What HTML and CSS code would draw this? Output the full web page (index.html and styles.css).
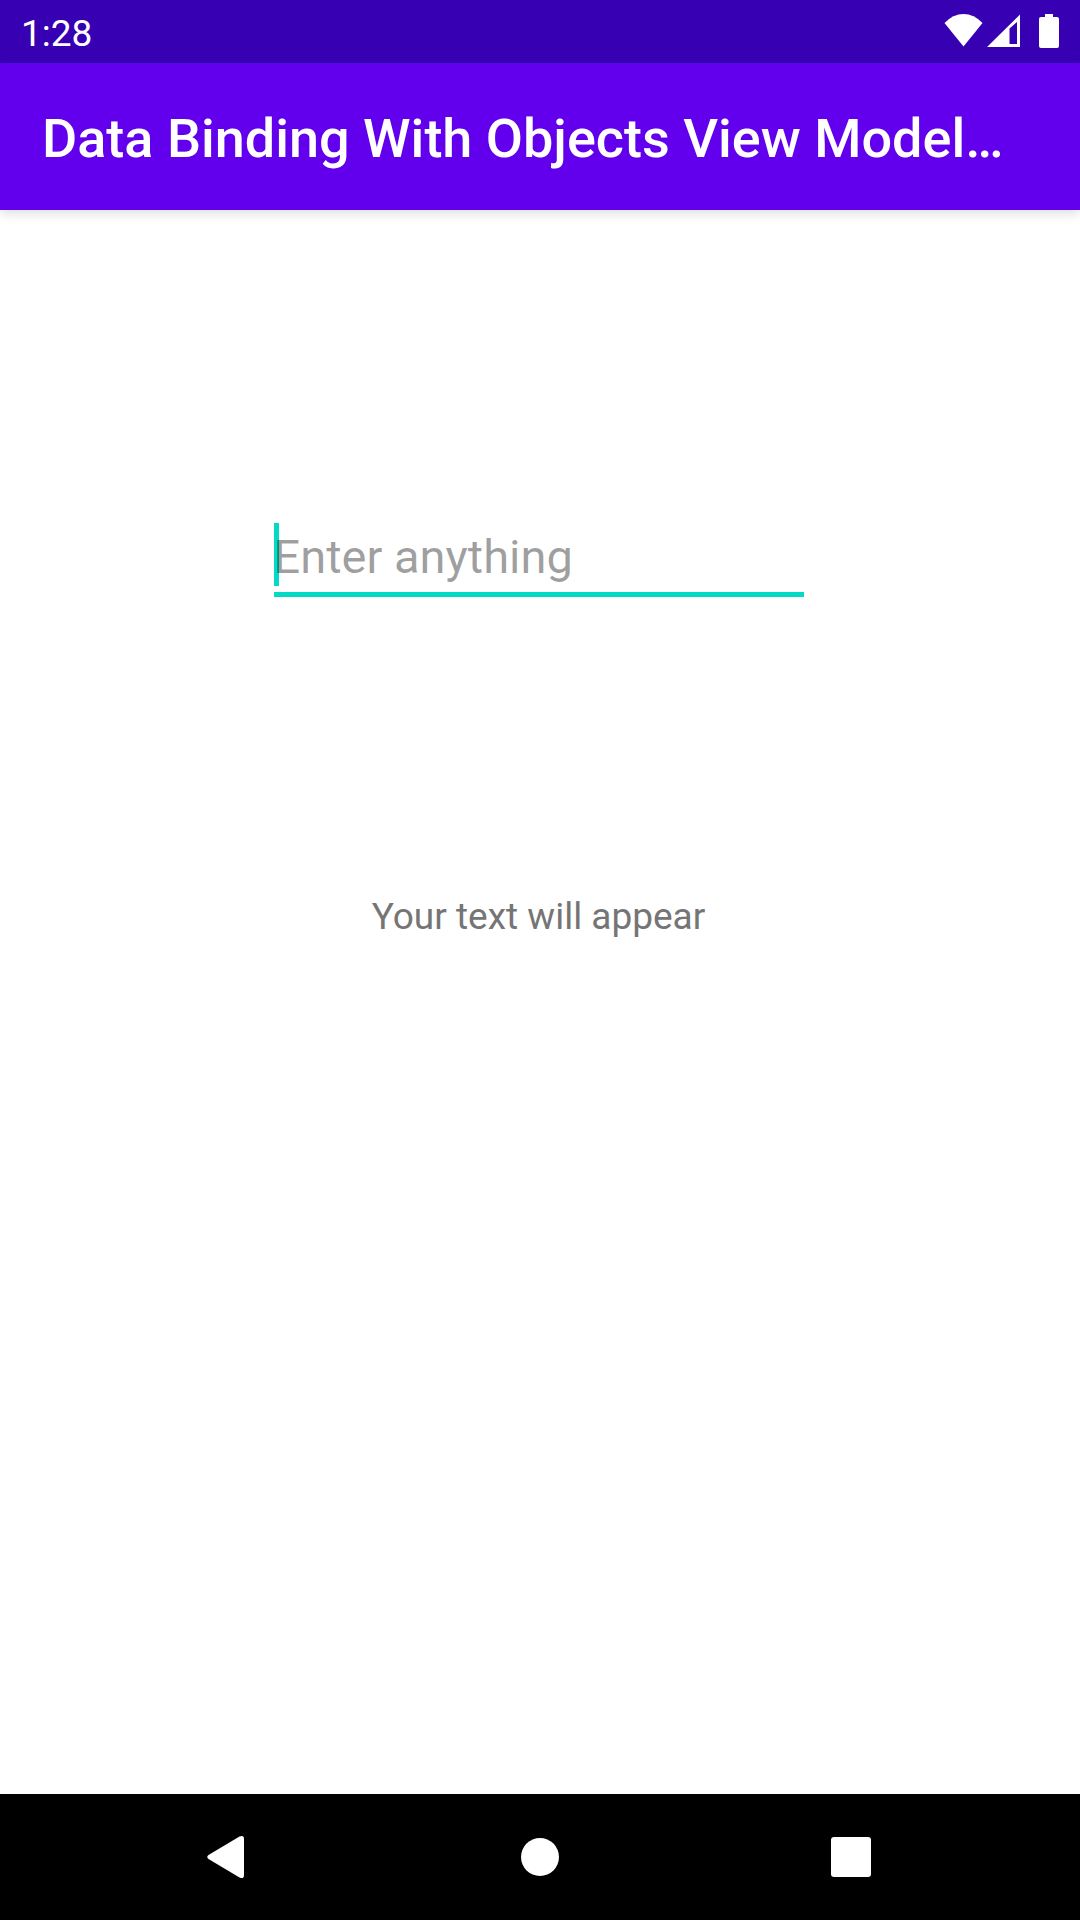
FILE: index.html
```html
<!DOCTYPE html>
<html lang="en">
<head>
<meta charset="utf-8">
<meta name="viewport" content="width=device-width, initial-scale=1">
<title>Data Binding With Objects View Model</title>
<link rel="stylesheet" href="styles.css">
</head>
<body>
<div class="screen">
  <div class="status-bar">
    <time class="clock">1:28</time>
    <div class="status-icons">
      <svg class="wifi" width="40" height="34" viewBox="0 0 40 34" aria-hidden="true"><path d="M0.500 9Q9 0 19.500 0Q30 0 38.500 9L19.500 32.500Z"/></svg>
      <svg class="signal" width="33" height="34" viewBox="0 0 33 34" aria-hidden="true"><path fill-rule="evenodd" d="M0 33L33 0.500V33ZM22.500 14.500V30H30V8Z"/></svg>
      <svg class="battery" width="20" height="34" viewBox="0 0 20 34" aria-hidden="true"><path d="M6 0H14V3H18Q20 3 20 5V32Q20 34 18 34H2Q0 34 0 32V5Q0 3 2 3H6Z"/></svg>
    </div>
  </div>
  <header class="app-bar">
    <h1 class="title">Data Binding With Objects View Model…</h1>
  </header>
  <main class="content">
    <input class="field" id="entry" type="text" placeholder="Enter anything" aria-label="Enter anything">
    <output class="result" for="entry">Your text will appear</output>
  </main>
  <nav class="nav-bar">
    <button class="nav-button" type="button" aria-label="Back">
      <svg width="44" height="44" viewBox="0 0 44 44" aria-hidden="true"><path d="M1.500 20L32.500 1.500Q37 -0.500 37 4V40Q37 44.500 32.500 42.500L1.500 24Q-1 22 1.500 20Z"/></svg>
    </button>
    <button class="nav-button" type="button" aria-label="Home">
      <svg width="44" height="44" viewBox="0 0 44 44" aria-hidden="true"><circle cx="22" cy="22" r="19"/></svg>
    </button>
    <button class="nav-button" type="button" aria-label="Recent apps">
      <svg width="44" height="44" viewBox="0 0 44 44" aria-hidden="true"><rect x="2" y="2" width="40" height="40" rx="3"/></svg>
    </button>
  </nav>
</div>
</body>
</html>
```
FILE: styles.css
```css
* {
  box-sizing: border-box;
}

body {
  margin: 0;
  background: #fff;
  font-family: Roboto, sans-serif;
}

svg {
  display: block;
  fill: #fff;
}

.screen {
  display: flex;
  flex-direction: column;
  min-height: 100vh;
}

.status-bar {
  display: flex;
  align-items: center;
  justify-content: space-between;
  height: 63px;
  padding: 0 21px;
  background: #3700b3;
  color: #fff;
}

.clock {
  padding-top: 4px;
  font-size: 37px;
  line-height: 44px;
}

.status-icons {
  display: flex;
  gap: 3px;
  padding-bottom: 1px;
}

.battery {
  margin-left: 16px;
}

.app-bar {
  display: flex;
  align-items: center;
  height: 147px;
  padding: 4px 42px 0;
  background: #6200ee;
  box-shadow: 0 4px 10px rgba(0, 0, 0, 0.12);
  color: #fff;
}

.title {
  margin: 0;
  overflow: hidden;
  font-size: 54px;
  font-weight: 500;
  line-height: 62px;
  text-overflow: ellipsis;
  white-space: nowrap;
}

.content {
  display: flex;
  flex: 1;
  flex-direction: column;
  align-items: center;
  gap: 298px;
  padding: 313px 3px 0 0;
}

.field {
  width: 530px;
  max-width: 100%;
  height: 74px;
  padding: 0 0 2px;
  border: 0;
  border-bottom: 5px solid #03dac5;
  border-radius: 0;
  outline: 0;
  background: linear-gradient(#03dac5, #03dac5) 0 0 / 5px 63px no-repeat;
  color: rgba(0, 0, 0, 0.87);
  font-family: inherit;
  font-size: 47px;
}

.field::placeholder {
  color: rgba(0, 0, 0, 0.38);
  opacity: 1;
}

.result {
  color: #757575;
  font-size: 37px;
  line-height: 44px;
}

.nav-bar {
  display: grid;
  grid-template-columns: repeat(3, 1fr);
  height: 126px;
  padding: 0 73px;
  background: #000;
}

.nav-button {
  display: flex;
  align-items: center;
  justify-content: center;
  padding: 0;
  border: 0;
  background: none;
}
```
